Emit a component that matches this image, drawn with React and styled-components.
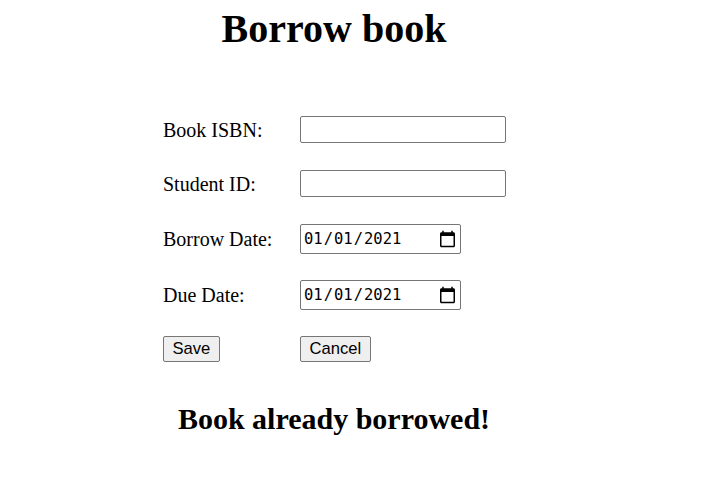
import React from "react";
import styled, { createGlobalStyle } from "styled-components";

const Global = createGlobalStyle`
  html, body { margin: 0; padding: 0; background: #fff; }
  body { font-family: "Liberation Serif", "Times New Roman", serif; color: #000; }
`;

const Page = styled.div`
  width: 668px;
  padding-top: 6px;
`;

const Title = styled.h1`
  margin: 0;
  font-size: 40px;
  font-weight: bold;
  text-align: center;
  line-height: 46px;
`;

const Form = styled.form`
  display: flex;
  flex-direction: column;
  margin: 64px 0 0 163px;
`;

const Row = styled.div`
  display: grid;
  grid-template-columns: 137px auto;
  align-items: center;
  justify-items: start;
  margin-bottom: ${(p) => (p.$last ? 0 : p.$tall ? 26 : 27)}px;
`;

const Label = styled.label`
  font-size: 20px;
  line-height: 24px;
`;

const TextInput = styled.input`
  box-sizing: border-box;
  width: 206px;
  height: 27px;
  border: 1px solid #767676;
  border-radius: 2px;
  padding: 1px 2px;
  font-size: 16px;
  background: #fff;
`;

const DateInput = styled.input`
  box-sizing: border-box;
  width: 161px;
  height: 30px;
  border: 1px solid #767676;
  border-radius: 2px;
  padding: 1px 3px 1px 2px;
  font-family: "DejaVu Sans Mono", "Liberation Mono", monospace;
  font-size: 15.5px;
  color: #000;
  background: #fff;
  &::-webkit-calendar-picker-indicator {
    width: 19px;
    height: 19px;
    margin-left: 0;
    padding: 0;
    filter: brightness(0);
  }
`;

const Button = styled.button`
  box-sizing: border-box;
  height: 26px;
  padding: 0 8.5px;
  font-family: "Liberation Sans", Arial, sans-serif;
  font-size: 16.6px;
  color: #000;
  background: #efefef;
  border: 1px solid #767676;
  border-radius: 2px;
`;

const Message = styled.h2`
  margin: 40px 0 0;
  font-size: 30px;
  font-weight: bold;
  text-align: center;
  line-height: 34px;
`;

export default function App() {
  return (
    <Page>
      <Global />
      <Title>Borrow book</Title>
      <Form onSubmit={(e) => e.preventDefault()}>
        <Row>
          <Label htmlFor="isbn">Book ISBN:</Label>
          <TextInput id="isbn" type="text" />
        </Row>
        <Row>
          <Label htmlFor="sid">Student ID:</Label>
          <TextInput id="sid" type="text" />
        </Row>
        <Row $tall>
          <Label htmlFor="bdate">Borrow Date:</Label>
          <DateInput id="bdate" type="date" defaultValue="2021-01-01" />
        </Row>
        <Row $tall>
          <Label htmlFor="ddate">Due Date:</Label>
          <DateInput id="ddate" type="date" defaultValue="2021-01-01" />
        </Row>
        <Row $last>
          <Button type="submit">Save</Button>
          <Button type="button">Cancel</Button>
        </Row>
      </Form>
      <Message>Book already borrowed!</Message>
    </Page>
  );
}
